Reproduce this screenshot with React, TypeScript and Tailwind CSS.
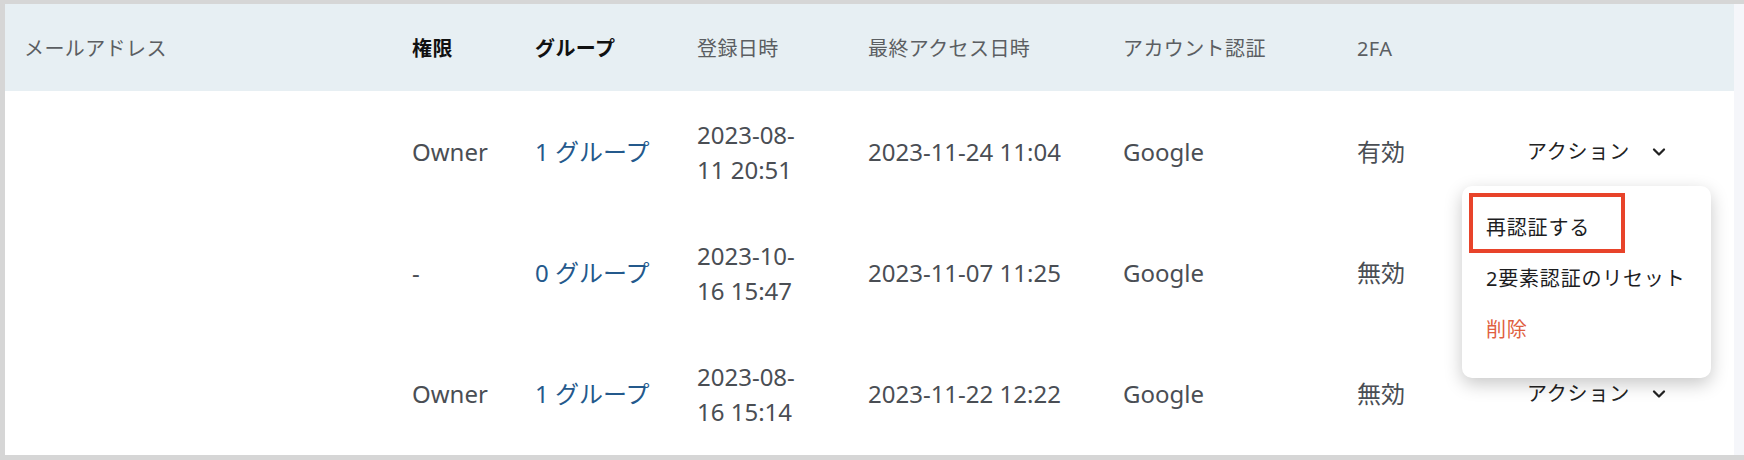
import { ChevronDown } from "lucide-react";

interface Member {
  role: string;
  groups: number;
  registered: string;
  lastAccess: string;
  auth: string;
  twoFactor: string;
}

const MEMBERS: Member[] = [
  { role: "Owner", groups: 1, registered: "2023-08-11 20:51", lastAccess: "2023-11-24 11:04", auth: "Google", twoFactor: "有効" },
  { role: "-", groups: 0, registered: "2023-10-16 15:47", lastAccess: "2023-11-07 11:25", auth: "Google", twoFactor: "無効" },
  { role: "Owner", groups: 1, registered: "2023-08-16 15:14", lastAccess: "2023-11-22 12:22", auth: "Google", twoFactor: "無効" },
];

const COLS = "grid grid-cols-[407px_123px_162px_171px_255px_234px_170px_207px]";
const FONT = "font-['Noto_Sans','Noto_Sans_CJK_JP',sans-serif]";

export default function App() {
  return (
    <div className={`flex h-[460px] w-[1744px] bg-[#d6d6d6] pb-[5px] pl-[5px] pt-[4px] ${FONT}`}>
      <div className="relative flex w-[1729px] flex-col bg-white">
        <div className={`${COLS} h-[87px] items-center bg-[#e7eff3] pt-[3px] text-[20px] tracking-[0.4px]`}>
          <span className="pl-[19px] text-[#5b5e62]">メールアドレス</span>
          <span className="font-bold text-[#111]">権限</span>
          <span className="font-bold text-[#111]">グループ</span>
          <span className="text-[#5b5e62]">登録日時</span>
          <span className="text-[#5b5e62]">最終アクセス日時</span>
          <span className="text-[#5b5e62]">アカウント認証</span>
          <span className="text-[#5b5e62]">2FA</span>
          <span />
        </div>

        {MEMBERS.map((m, i) => (
          <div
            key={i}
            className={`${COLS} ${i === 2 ? "h-[122px]" : "h-[121px]"} items-center text-[24px] text-[#4a4e54]`}
          >
            <span />
            <span>{m.role}</span>
            <span className="text-[#24598c]">{m.groups} グループ</span>
            <span className="max-w-[118px] leading-[35px]">{m.registered}</span>
            <span>{m.lastAccess}</span>
            <span>{m.auth}</span>
            <span>{m.twoFactor}</span>
            <span className="flex items-center text-[20px] tracking-[0.8px] text-[#222]">
              アクション
              <ChevronDown className="ml-[19px] size-[20px] text-[#222]" strokeWidth={2.75} />
            </span>
          </div>
        ))}

        <ActionMenu />
      </div>
      <div className="w-[10px] bg-[#f5f6fa]" />
    </div>
  );
}

function ActionMenu() {
  return (
    <div className="absolute left-[1457px] top-[182px] flex h-[192px] w-[249px] flex-col rounded-[10px] bg-white pt-[16px] text-[20px] tracking-[0.8px] shadow-[0_6px_18px_rgba(0,0,0,0.22)]">
      <div className="flex h-[51px] items-center pl-[24px] text-[#1d1d1f]">再認証する</div>
      <div className="flex h-[51px] items-center pl-[24px] text-[#1d1d1f]">2要素認証のリセット</div>
      <div className="flex h-[51px] items-center pl-[24px] text-[#e0603f]">削除</div>
      {/* annotation box around the first item */}
      <span className="absolute left-[7px] top-[7px] h-[60px] w-[156px] border-[4px] border-[#e8432a]" />
    </div>
  );
}
